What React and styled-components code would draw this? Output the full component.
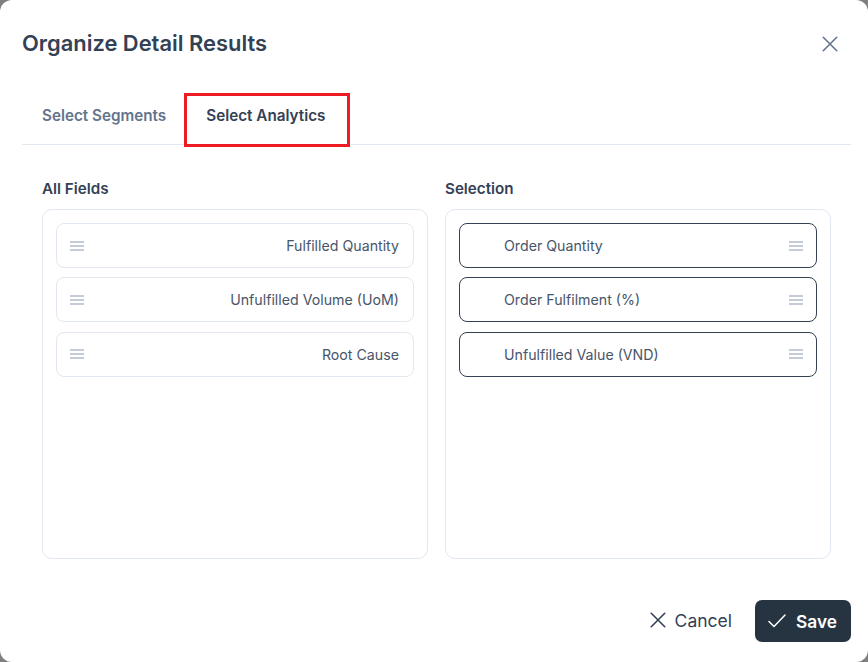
import React from 'react'
import styled, { createGlobalStyle } from 'styled-components'

const allFields = ['Fulfilled Quantity', 'Unfulfilled Volume (UoM)', 'Root Cause']
const selection = ['Order Quantity', 'Order Fulfilment (%)', 'Unfulfilled Value (VND)']

const CloseIcon = ({ size }) => (
  <svg width={size} height={size} viewBox="0 0 16 16" fill="none" stroke="currentColor" strokeWidth="1.4" strokeLinecap="round">
    <path d="M2 2l12 12M14 2L2 14" />
  </svg>
)

const CheckIcon = () => (
  <svg width="18" height="14" viewBox="0 0 18 14" fill="none" stroke="currentColor" strokeWidth="1.5" strokeLinecap="round" strokeLinejoin="round">
    <path d="M1 7.5l5 5L17 1" />
  </svg>
)

const DragIcon = () => (
  <Handle viewBox="0 0 14 10" fill="none" stroke="#8a9ab3" strokeWidth="1.2">
    <path d="M0 1h14M0 5h14M0 9h14" />
  </Handle>
)

const App = () => {
  return (
    <>
      <GlobalStyle />
      <Modal>
        <Header>
          <Title>Organize Detail Results</Title>
          <CloseButton><CloseIcon size={18} /></CloseButton>
        </Header>

        <Tabs>
          <Tab>Select Segments</Tab>
          <Tab $active>
            Select Analytics
            <Highlight />
          </Tab>
        </Tabs>

        <Columns>
          <Column>
            <ColumnTitle>All Fields</ColumnTitle>
            <Panel>
              {allFields.map((name) => (
                <Item key={name}>
                  <DragIcon />
                  <ItemLabel $right>{name}</ItemLabel>
                </Item>
              ))}
            </Panel>
          </Column>
          <Column>
            <ColumnTitle>Selection</ColumnTitle>
            <Panel>
              {selection.map((name) => (
                <Item key={name} $selected>
                  <ItemLabel>{name}</ItemLabel>
                  <DragIcon />
                </Item>
              ))}
            </Panel>
          </Column>
        </Columns>

        <Footer>
          <CancelButton><CloseIcon size={18} />Cancel</CancelButton>
          <SaveButton><CheckIcon />Save</SaveButton>
        </Footer>
      </Modal>
    </>
  )
}

// ///// Style ////////
const GlobalStyle = createGlobalStyle`
  html, body {
    margin: 0;
    padding: 0;
    background: #7f7f7f;
  }
  * {
    box-sizing: border-box;
  }
`
const Modal = styled.div`
  width: 868px;
  height: 662px;
  background: #fff;
  border-radius: 12px;
  padding: 0 17px 20px 22px;
  display: flex;
  flex-direction: column;
  font-family: Inter, "Liberation Sans", sans-serif;
  overflow: hidden;
`
const Header = styled.div`
  height: 87px;
  flex: none;
  display: flex;
  align-items: center;
  justify-content: space-between;
`
const Title = styled.h1`
  margin: 0 0 2px;
  font-size: 21.9px;
  font-weight: 600;
  color: #334155;
`
const CloseButton = styled.button`
  border: none;
  background: none;
  padding: 0;
  width: 18px;
  margin-right: 12px;
  display: flex;
  color: #64748b;
`
const Tabs = styled.div`
  height: 58px;
  flex: none;
  display: flex;
  border-bottom: 1px solid #e2e8f0;
`
const Tab = styled.div`
  position: relative;
  padding: 20px 20px 0;
  font-size: 15.25px;
  line-height: 18px;
  font-weight: 600;
  color: ${(p) => (p.$active ? '#334155' : '#64748b')};
`
const Highlight = styled.span`
  position: absolute;
  top: 6px;
  right: -5px;
  bottom: -3px;
  left: -2px;
  border: 3px solid #ed1c24;
`
const Columns = styled.div`
  flex: 1;
  display: flex;
  gap: 17px;
  padding: 35px 20px 0;
`
const Column = styled.div`
  width: 386px;
  display: flex;
  flex-direction: column;
`
const ColumnTitle = styled.div`
  font-size: 15.2px;
  line-height: 18px;
  font-weight: 600;
  color: #334155;
  margin-bottom: 11px;
`
const Panel = styled.div`
  height: 350px;
  border: 1px solid #e2e8f0;
  border-radius: 10px;
  padding: 13px;
  display: flex;
  flex-direction: column;
  gap: 9.4px;
`
const Item = styled.div`
  height: 45px;
  flex: none;
  display: flex;
  align-items: center;
  justify-content: space-between;
  padding: 0 13px;
  border: 1px solid ${(p) => (p.$selected ? '#334155' : '#e2e8f0')};
  border-radius: 8px;
`
const ItemLabel = styled.span`
  flex: 1;
  font-size: 14.2px;
  color: #475569;
  text-align: ${(p) => (p.$right ? 'right' : 'left')};
  padding: ${(p) => (p.$right ? '0 1px 0 0' : '0 0 0 31px')};
`
const Handle = styled.svg`
  width: 14px;
  height: 10px;
  flex: none;
`
const Footer = styled.div`
  display: flex;
  justify-content: flex-end;
  align-items: center;
  gap: 8px;
`
const CancelButton = styled.button`
  display: flex;
  align-items: center;
  gap: 8px;
  height: 42px;
  padding: 0 15px 2px;
  border: none;
  background: none;
  font-family: inherit;
  font-size: 17.5px;
  color: #334155;
`
const SaveButton = styled.button`
  display: flex;
  align-items: center;
  gap: 10px;
  height: 42px;
  width: 96px;
  padding: 0 13px;
  border: none;
  border-radius: 7px;
  background: #263442;
  font-family: inherit;
  font-size: 17.3px;
  font-weight: 600;
  color: #fff;
`

export default App
